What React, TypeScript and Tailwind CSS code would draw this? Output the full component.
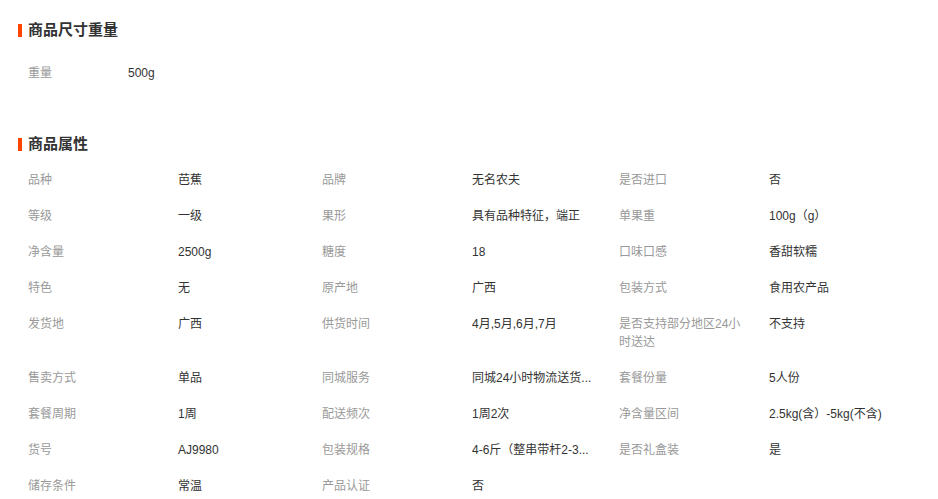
const sizeRows = [["重量", "500g"]];

const attrs: [string, string][] = [
  ["品种", "芭蕉"],
  ["品牌", "无名农夫"],
  ["是否进口", "否"],
  ["等级", "一级"],
  ["果形", "具有品种特征，端正"],
  ["单果重", "100g（g）"],
  ["净含量", "2500g"],
  ["糖度", "18"],
  ["口味口感", "香甜软糯"],
  ["特色", "无"],
  ["原产地", "广西"],
  ["包装方式", "食用农产品"],
  ["发货地", "广西"],
  ["供货时间", "4月,5月,6月,7月"],
  ["是否支持部分地区24小时送达", "不支持"],
  ["售卖方式", "单品"],
  ["同城服务", "同城24小时物流送货..."],
  ["套餐份量", "5人份"],
  ["套餐周期", "1周"],
  ["配送频次", "1周2次"],
  ["净含量区间", "2.5kg(含）-5kg(不含)"],
  ["货号", "AJ9980"],
  ["包装规格", "4-6斤（整串带杆2-3..."],
  ["是否礼盒装", "是"],
  ["储存条件", "常温"],
  ["产品认证", "否"],
];

function SectionTitle({ text }: { text: string }) {
  return (
    <div className="flex items-center h-[20px]">
      <span className="w-[4px] h-[13px] bg-[#ff4400]"></span>
      <span className="ml-[6px] text-[15px] font-bold text-[#333]">{text}</span>
    </div>
  );
}

export default function App() {
  return (
    <div
      className="w-[938px] h-[499px] overflow-hidden bg-white pl-[18px] pt-[20px]"
      style={{ fontFamily: '"Liberation Sans", "Noto Sans CJK SC", sans-serif' }}
    >
      {/* 商品尺寸重量 */}
      <SectionTitle text="商品尺寸重量" />
      <div className="mt-[15px] pl-[10px]">
        {sizeRows.map(([k, v]) => (
          <div key={k} className="flex py-[9px] text-[12px] leading-[18px]">
            <span className="w-[100px] text-[#999]">{k}</span>
            <span className="text-[#333]">{v}</span>
          </div>
        ))}
      </div>

      {/* 商品属性 */}
      <div className="mt-[43px]">
        <SectionTitle text="商品属性" />
      </div>
      <div className="mt-[8px] pl-[10px] grid grid-cols-[294px_297px_297px]">
        {attrs.map(([k, v]) => (
          <div key={k} className="flex py-[9px] text-[12px] leading-[18px]">
            <span className="w-[150px] pr-[20px] text-[#999]">{k}</span>
            <span className="w-[127px] whitespace-nowrap text-[#333]">{v}</span>
          </div>
        ))}
      </div>
    </div>
  );
}
